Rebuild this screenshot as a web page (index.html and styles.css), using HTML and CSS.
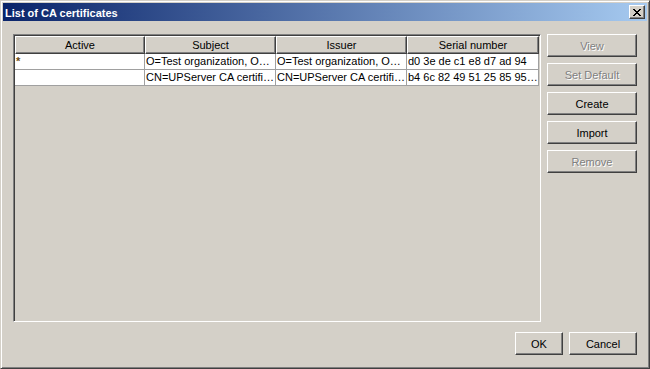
FILE: index.html
```html
<!DOCTYPE html>
<html lang="en">
<head>
<meta charset="UTF-8">
<meta name="viewport" content="width=device-width, initial-scale=1.0">
<title>List of CA certificates</title>
<link rel="stylesheet" href="styles.css">
</head>
<body>

<div class="window">
    <div class="titlebar">
        <span class="title">List of CA certificates</span>
        <button class="close-btn" title="Close">
            <svg width="8" height="7" viewBox="0 0 8 7"><path d="M0 0h2v1h1v1h2v-1h1v-1h2v1h-1v1h-1v1h-1v1h1v1h1v1h1v1h-2v-1h-1v-1h-2v1h-1v1h-2v-1h1v-1h1v-1h1v-1h-1v-1h-1v-1h-1z" fill="#000"/></svg>
        </button>
    </div>

    <div class="dialog-body">
        <div class="main">
            <div class="table-frame">
                <div class="grid">
                    <div class="head">Active</div>
                    <div class="head">Subject</div>
                    <div class="head">Issuer</div>
                    <div class="head">Serial number</div>

                    <div class="cell star">*</div>
                    <div class="cell">O=Test organization, O…</div>
                    <div class="cell">O=Test organization, O…</div>
                    <div class="cell">d0 3e de c1 e8 d7 ad 94</div>

                    <div class="cell"></div>
                    <div class="cell">CN=UPServer CA certifi…</div>
                    <div class="cell">CN=UPServer CA certifi…</div>
                    <div class="cell">b4 6c 82 49 51 25 85 95…</div>
                </div>
            </div>
            <div class="side-buttons">
                <button class="btn" disabled>View</button>
                <button class="btn" disabled>Set Default</button>
                <button class="btn">Create</button>
                <button class="btn">Import</button>
                <button class="btn" disabled>Remove</button>
            </div>
        </div>
        <div class="footer">
            <button class="btn btn-ok">OK</button>
            <button class="btn btn-cancel">Cancel</button>
        </div>
    </div>
</div>

</body>
</html>
```

FILE: styles.css
```css
* {
    box-sizing: border-box;
}

body {
    margin: 0;
    padding: 0;
    background: #d4d0c8;
    font-family: "Liberation Sans", Arial, sans-serif;
    font-size: 11px;
    color: #000;
}

.window {
    width: 650px;
    height: 369px;
    background: #d4d0c8;
    border: 1px solid;
    border-color: #d4d0c8 #404040 #404040 #d4d0c8;
    box-shadow: inset 1px 1px #fff, inset -1px -1px #808080;
    padding: 2px;
    display: flex;
    flex-direction: column;
}

.titlebar {
    height: 18px;
    background: linear-gradient(to right, #0a246a, #a6caf0);
    display: flex;
    align-items: center;
    justify-content: space-between;
    padding: 0 2px 0 2px;
}

.title {
    color: #fff;
    font-weight: bold;
    font-size: 11px;
    padding-top: 1px;
}

.close-btn {
    width: 16px;
    height: 14px;
    padding: 0;
    margin: 0;
    background: #d4d0c8;
    border: 1px solid;
    border-color: #fff #404040 #404040 #fff;
    box-shadow: inset -1px -1px #808080;
    display: flex;
    align-items: center;
    justify-content: center;
}

.dialog-body {
    flex: 1;
    padding: 13px 10px 10px 10px;
    display: flex;
    flex-direction: column;
}

.main {
    display: flex;
    gap: 6px;
    height: 288px;
}

.table-frame {
    width: 528px;
    height: 288px;
    border: 1px solid;
    border-color: #808080 #fff #fff #808080;
    box-shadow: inset 1px 1px #404040, inset -1px -1px #d4d0c8;
    padding: 1px;
    background: #d4d0c8;
    overflow: hidden;
}

.grid {
    display: grid;
    grid-template-columns: 130px 131px 131px 132px;
    grid-auto-rows: 16px;
    grid-template-rows: 18px;
}

.head {
    height: 18px;
    border: 1px solid;
    border-color: #fff #404040 #404040 #fff;
    box-shadow: inset -1px -1px #808080;
    text-align: center;
    line-height: 16px;
    background: #d4d0c8;
}

.cell {
    height: 16px;
    background: #fff;
    border-right: 1px solid #a0a0a0;
    border-bottom: 1px solid #a0a0a0;
    padding: 0 1px;
    line-height: 15px;
    white-space: nowrap;
    overflow: hidden;
}

.star {
    color: #6a4a10;
    font-weight: bold;
}

.side-buttons {
    width: 90px;
    display: flex;
    flex-direction: column;
    gap: 6px;
}

.btn {
    height: 23px;
    padding: 0;
    margin: 0;
    font-family: "Liberation Sans", Arial, sans-serif;
    font-size: 11px;
    color: #000;
    background: #d4d0c8;
    border: 1px solid;
    border-color: #fff #404040 #404040 #fff;
    box-shadow: inset -1px -1px #808080;
}

.btn:disabled {
    color: #808080;
    text-shadow: 1px 1px #fff;
}

.footer {
    margin-top: 10px;
    display: flex;
    justify-content: flex-end;
    gap: 6px;
}

.btn-ok {
    width: 48px;
}

.btn-cancel {
    width: 68px;
}
```
